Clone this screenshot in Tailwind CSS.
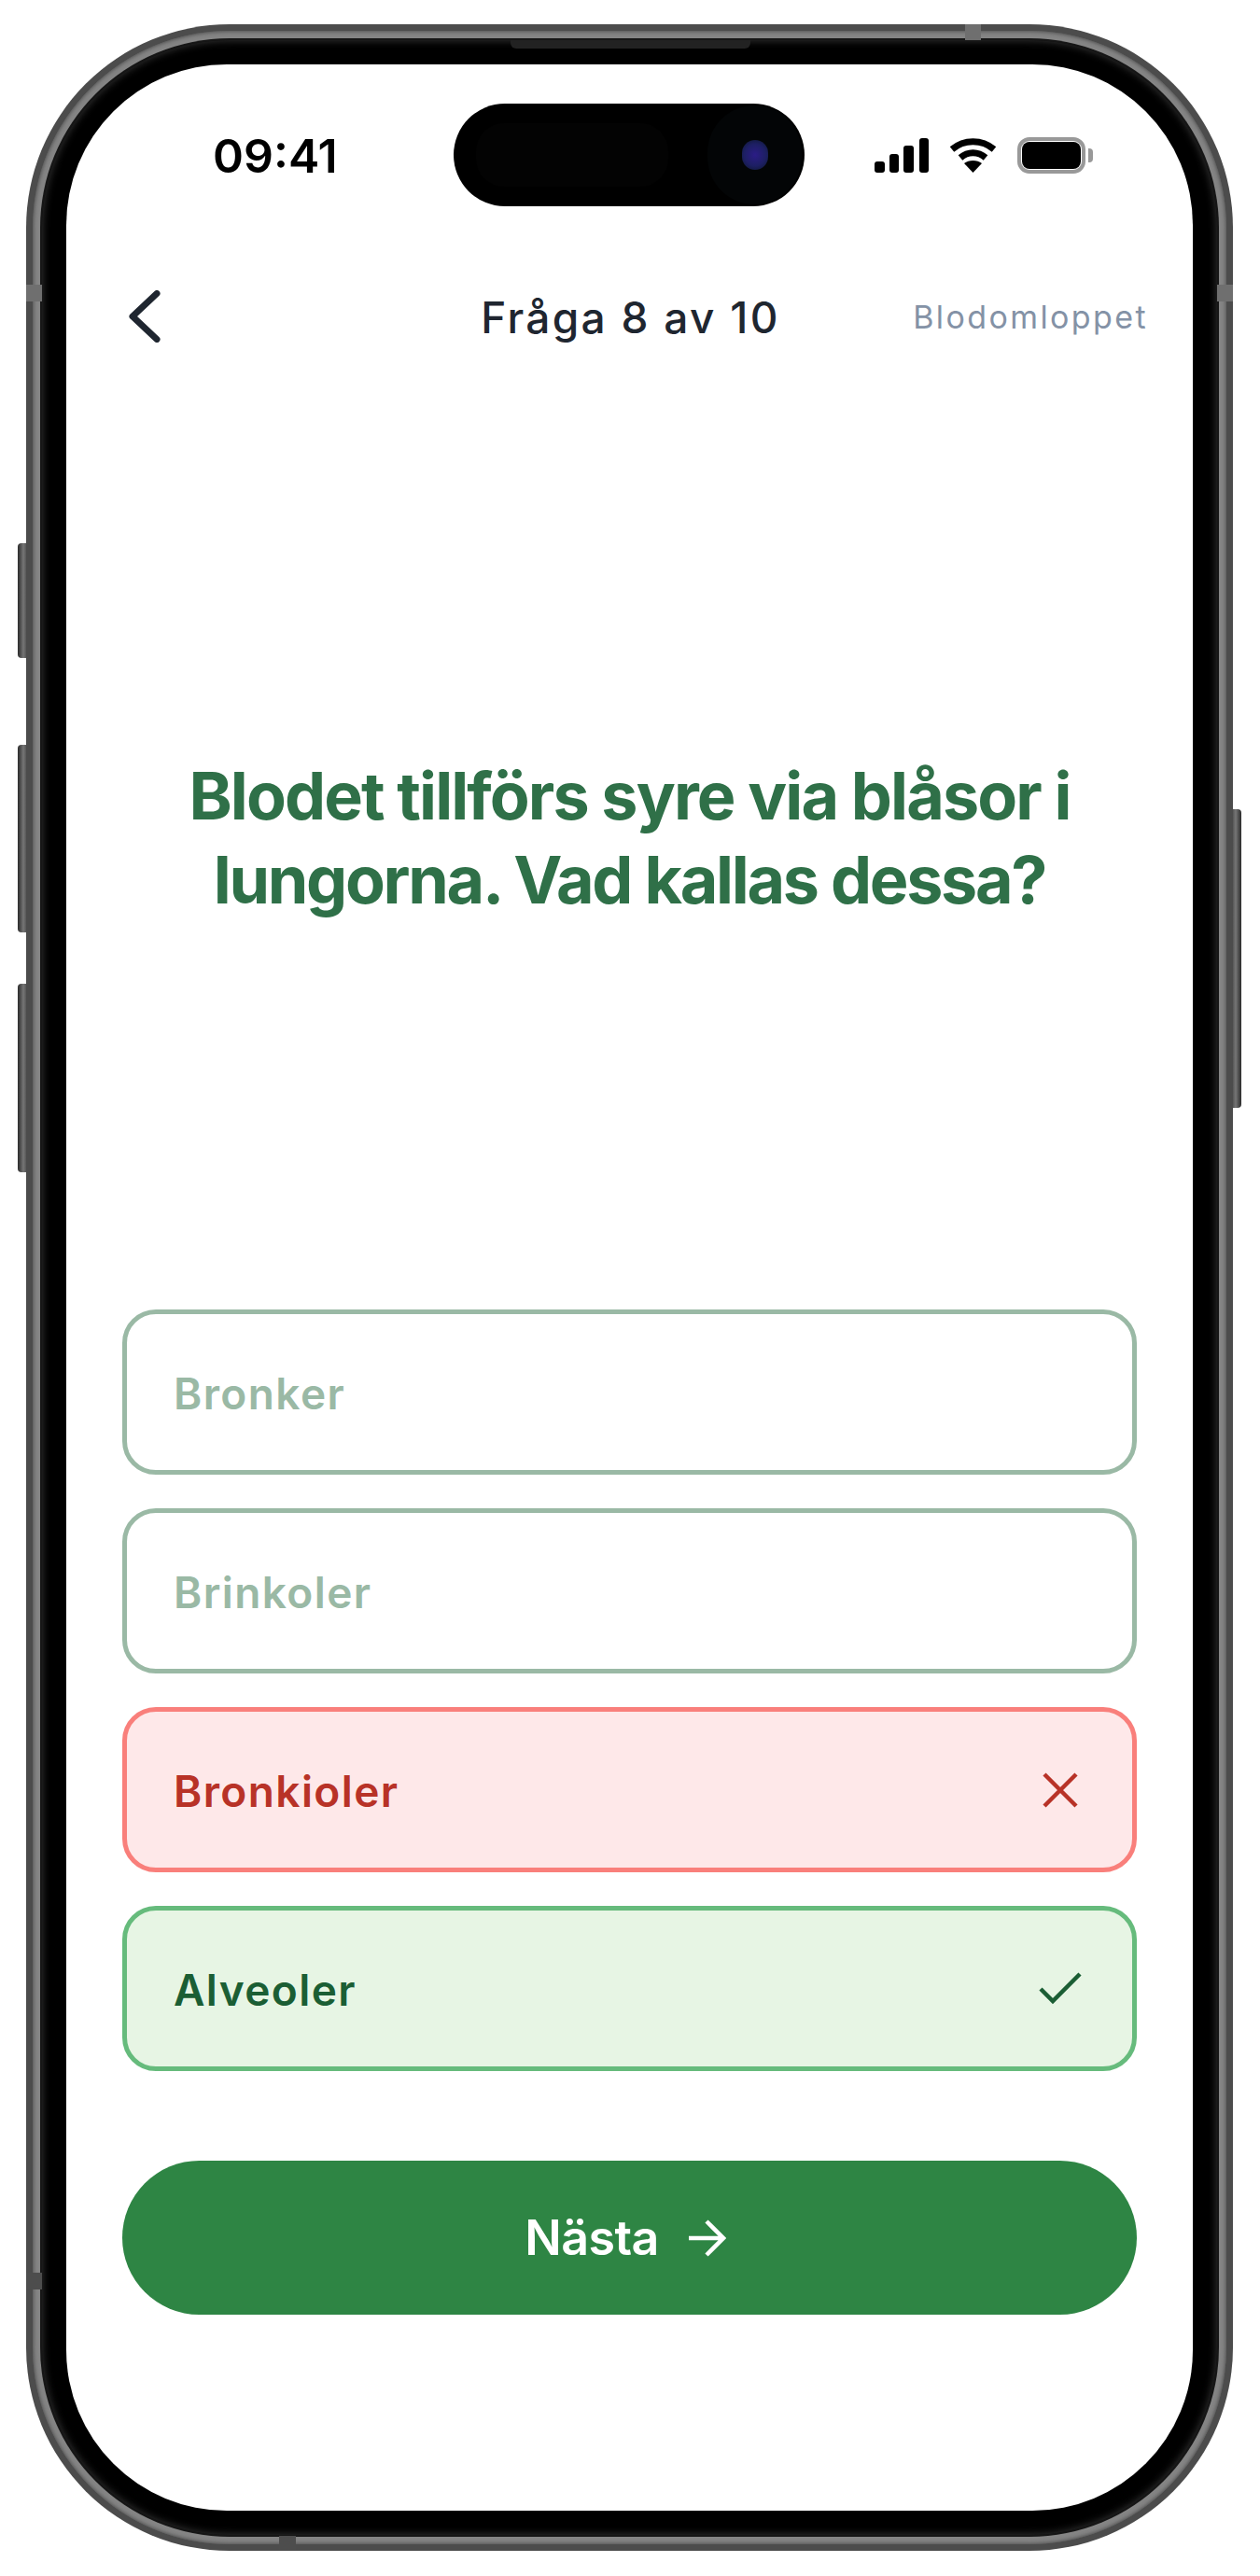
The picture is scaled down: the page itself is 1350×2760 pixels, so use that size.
<!DOCTYPE html>
<html lang="sv">
<head>
    <meta charset="UTF-8">
    <meta name="viewport" content="width=device-width, initial-scale=1.0">
    <title>Fråga 8 av 10</title>
    <script src="https://cdn.jsdelivr.net/npm/@tailwindcss/browser@4"></script>
</head>

<body class="bg-white font-['Inter',sans-serif]">
    <div class="relative w-[1350px] h-[2760px] pt-[26px] pl-[28px]">

        <!-- sidoknappar -->
        <div class="absolute left-[19px] top-[582px] w-[12px] h-[123px] rounded-l-[4px] bg-gradient-to-r from-[#2b2b2b] via-[#767676] to-[#3a3a3a]"></div>
        <div class="absolute left-[19px] top-[798px] w-[12px] h-[201px] rounded-l-[4px] bg-gradient-to-r from-[#2b2b2b] via-[#767676] to-[#3a3a3a]"></div>
        <div class="absolute left-[19px] top-[1054px] w-[12px] h-[202px] rounded-l-[4px] bg-gradient-to-r from-[#2b2b2b] via-[#767676] to-[#3a3a3a]"></div>
        <div class="absolute left-[1318px] top-[867px] w-[12px] h-[320px] rounded-r-[4px] bg-gradient-to-r from-[#3a3a3a] via-[#767676] to-[#2b2b2b]"></div>

        <!-- ram -->
        <div class="relative w-[1293px] h-[2707px] rounded-[218px] bg-[#4c4c4c] p-[7px]">
            <div class="w-full h-full rounded-[211px] bg-[#858585] p-[8px] shadow-[inset_0_0_5px_#3c3c3c]">
                <div class="w-full h-full rounded-[203px] bg-[#161616] p-[2px]">
                    <div class="w-full h-full rounded-[201px] bg-black p-[26px] shadow-[inset_0_0_10px_#3a3a3a]">

                        <!-- skärm -->
                        <div class="relative w-full h-full rounded-[172px] bg-white flex flex-col px-[60px]">
                            <div class="h-[171px] mt-[60px] shrink-0 flex items-start justify-between pl-[97px]">
                                <span class="text-[50px] leading-[76px] font-semibold text-black">09:41</span>
                                <div class="flex items-center gap-[22px] h-[75px] mr-[47px]">
                                    <!-- signal -->
                                    <svg width="58" height="37" viewBox="0 0 58 37" fill="#000">
                                        <rect x="0" y="25" width="11" height="12" rx="3"/>
                                        <rect x="16" y="17" width="10" height="20" rx="3"/>
                                        <rect x="31" y="8" width="11" height="29" rx="3"/>
                                        <rect x="48" y="0" width="10" height="37" rx="3"/>
                                    </svg>
                                    <!-- wifi -->
                                    <svg width="51" height="37" viewBox="0 0 51 37" fill="none" stroke="#000" stroke-width="7">
                                        <path d="M3 12 C16 1 35 1 48 12"/>
                                        <path d="M12 21 C20 14 31 14 39 21"/>
                                        <path fill="#000" stroke="none" d="M25.5 37 L16 27 C21 23 30 23 35 27 Z"/>
                                    </svg>
                                    <!-- batteri -->
                                    <div class="flex items-center gap-[3px]">
                                        <div class="w-[73px] h-[39px] rounded-[13px] border-[4px] border-[#999] p-[1px]">
                                            <div class="w-full h-full rounded-[8px] bg-black"></div>
                                        </div>
                                        <div class="w-[5px] h-[15px] rounded-r-[4px] bg-[#999]"></div>
                                    </div>
                                </div>
                            </div>

                            <!-- rubrikrad -->
                            <div class="relative shrink-0 h-[80px] flex items-center justify-center">
                                <svg class="absolute left-[7px] top-[11px]" width="34" height="56" viewBox="0 0 34 56" fill="none" stroke="#1f2630" stroke-width="7" stroke-linecap="round" stroke-linejoin="round">
                                    <path d="M30 3.5 L4 28 L30 52.5"/>
                                </svg>
                                <span class="ml-[2px] text-[46px] font-medium text-[#1f2630] tracking-[2.3px]">Fråga 8 av 10</span>
                                <span class="absolute right-[-12px] top-[18px] text-[34px] leading-[44px] text-[#8492a6] tracking-[2.4px]">Blodomloppet</span>
                            </div>

                            <!-- fråga -->
                            <div class="flex-1 flex items-center justify-center pt-[13px]">
                                <h1 class="text-[70px] leading-[90px] font-bold text-[#2f7048] text-center tracking-[-1.9px] whitespace-nowrap">Blodet tillförs syre via blåsor i<br><span class="tracking-[-2.3px]">lungorna. Vad kallas dessa?</span></h1>
                            </div>

                            <!-- svar -->
                            <div class="flex flex-col gap-[36px] shrink-0">
                                <div class="h-[177px] rounded-[36px] border-[5px] border-[#9ab9a5] bg-white flex items-center pl-[50px] pt-[3px]">
                                    <span class="text-[46px] font-semibold text-[#9ab9a5] tracking-[1.4px]">Bronker</span>
                                </div>
                                <div class="h-[177px] rounded-[36px] border-[5px] border-[#9ab9a5] bg-white flex items-center pl-[50px] pt-[3px]">
                                    <span class="text-[46px] font-semibold text-[#9ab9a5] tracking-[1.4px]">Brinkoler</span>
                                </div>
                                <div class="h-[177px] rounded-[36px] border-[5px] border-[#f97f7b] bg-[#fee8e9] flex items-center justify-between pl-[50px] pr-[57px] pt-[3px]">
                                    <span class="text-[46px] font-semibold text-[#b83227] tracking-[1.4px]">Bronkioler</span>
                                    <svg class="mb-[3px]" width="40" height="40" viewBox="0 0 40 40" fill="none" stroke="#b83227" stroke-width="4.5">
                                        <path d="M3 3 L37 37 M37 3 L3 37"/>
                                    </svg>
                                </div>
                                <div class="h-[177px] rounded-[36px] border-[5px] border-[#66bb7c] bg-[#e7f5e4] flex items-center justify-between pl-[50px] pr-[54px] pt-[3px]">
                                    <span class="text-[46px] font-semibold text-[#1b5e34] tracking-[1.4px]">Alveoler</span>
                                    <svg class="mb-[3px]" width="46" height="36" viewBox="0 0 46 36" fill="none" stroke="#1b5e34" stroke-width="4.5">
                                        <path d="M2 18 L15 31 L44 2"/>
                                    </svg>
                                </div>
                            </div>

                            <!-- nästa -->
                            <div class="shrink-0 mt-[96px] mb-[210px] h-[165px] rounded-full bg-[#2e8544] flex items-center justify-center gap-[32px] pr-[9px]">
                                <span class="text-[52px] font-semibold text-white tracking-[-0.6px]">Nästa</span>
                                <svg width="40" height="42" viewBox="0 0 40 42" fill="none" stroke="#fff" stroke-width="4.5">
                                    <path d="M0 21 L37 21 M19 3 L37 21 L19 39"/>
                                </svg>
                            </div>

                            <!-- dynamic island -->
                            <div class="absolute left-[415px] top-[42px] w-[376px] h-[110px] rounded-[55px] bg-black flex items-center pl-[24px]">
                                <div class="w-[206px] h-[68px] rounded-[30px] bg-[#030303]"></div>
                                <div class="absolute left-[272px] top-[2px] w-[101px] h-[106px] rounded-full bg-[#030506] flex items-center justify-center">
                                    <div class="w-[28px] h-[32px] rounded-full bg-[radial-gradient(circle,#2b1c86_0%,#1d1f63_55%,#0b1626_100%)]"></div>
                                </div>
                            </div>
                        </div>
                    </div>
                </div>
            </div>

            <!-- högtalare och antennband -->
            <div class="absolute left-[519px] top-[17px] w-[257px] h-[9px] rounded-b-[6px] bg-[#222]"></div>
            <div class="absolute left-[1006px] top-0 w-[17px] h-[17px] bg-[#6f6f6f]"></div>
            <div class="absolute left-0 top-[279px] w-[17px] h-[18px] bg-[#6f6f6f]"></div>
            <div class="absolute right-0 top-[279px] w-[17px] h-[18px] bg-[#6f6f6f]"></div>
            <div class="absolute left-[271px] bottom-0 w-[18px] h-[16px] bg-[#4d4d4d]"></div>
            <div class="absolute left-0 top-[2409px] w-[17px] h-[18px] bg-[#4d4d4d]"></div>
        </div>
    </div>
</body>

</html>
